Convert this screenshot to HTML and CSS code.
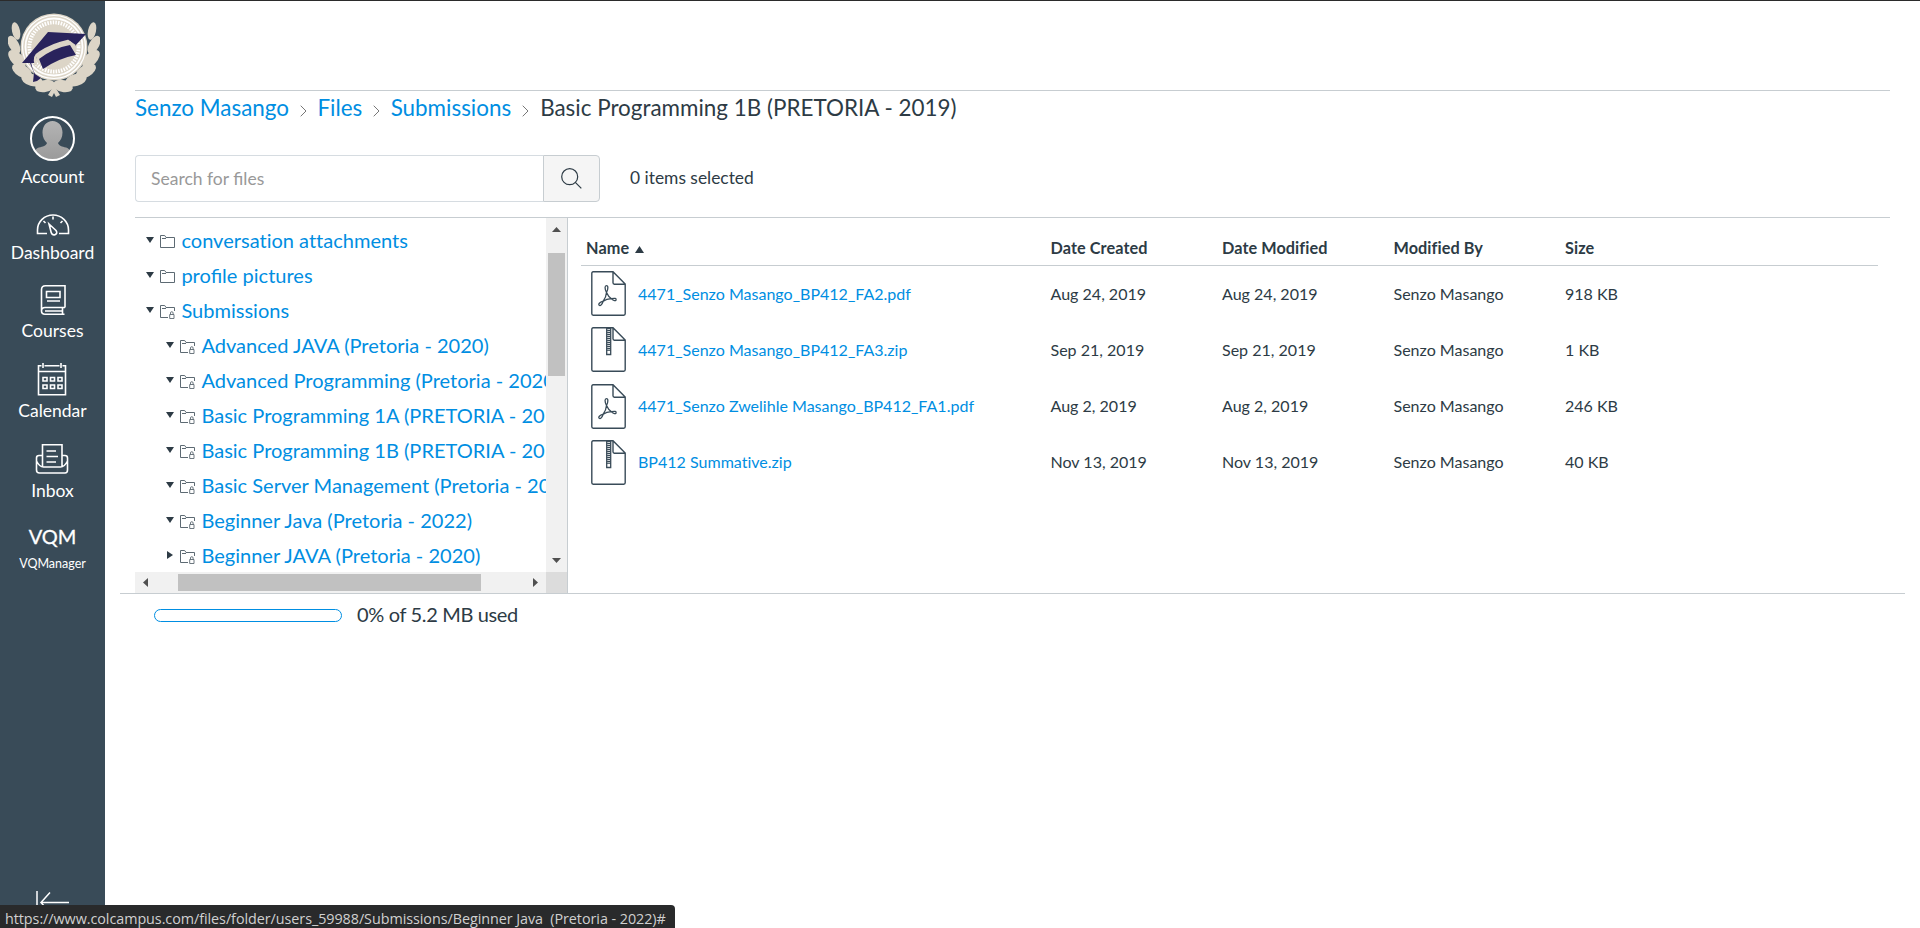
FILE: index.html
```html
<!DOCTYPE html>
<html lang="en">
<head>
<meta charset="utf-8">
<title>Files</title>
<link rel="stylesheet" href="styles.css">
</head>
<body>
<svg class="defs" width="0" height="0">
  <symbol id="folder" viewBox="0 0 15 13"><path d="M.5 12.5V.5h4.2l1.3 2h8.5v10zM2 3.5h4" fill="none" stroke="#5d6a73"/></symbol>
  <symbol id="folder-lock" viewBox="0 0 15 14"><path d="M8 12.5H.5V.5h4.2l1.3 2h8.5V6M2 3.5h4" fill="none" stroke="#5d6a73"/><path d="M9.7 9.5h4.3v4H9.7zM10.5 9.5V8q0-1.3 1.3-1.3T13.1 8v1.5" fill="none" stroke="#5d6a73" stroke-width=".9"/></symbol>
  <symbol id="pdf" viewBox="0 0 35 45"><path d="M22 .8H2.2Q.8.8.8 2.2v40.6q0 1.4 1.4 1.4h30.6q1.4 0 1.4-1.4V13zM22 .8v11q0 1.4 1.4 1.4h10.8" fill="none" stroke="#394b58" stroke-width="1.4"/><path d="M15.5 21.5C13.500 17.500 13.700 14.600 15.500 14.600S17.300 18 15.500 21.500C17 25 18.500 26.500 20.500 27.700C24 26.800 25.400 27.500 25.100 28.900S22.500 29.800 20.500 27.700C16.500 27.800 14 28.800 12.200 30.200C11 33.500 9.400 35.300 8.200 34.300S8.500 31.200 12.200 30.200C14 27.500 15.300 24.800 15.500 21.500Z" fill="none" stroke="#394b58" stroke-width="1.300"/></symbol>
  <symbol id="zip" viewBox="0 0 35 45"><path d="M22 .8H2.2Q.8.8.8 2.2v40.600q0 1.400 1.400 1.400h30.600q1.400 0 1.400-1.400V13zM22 .8v11q0 1.400 1.400 1.400h10.800" fill="none" stroke="#394b58" stroke-width="1.400"/><path d="M15.700 1v26.500h4V1" fill="none" stroke="#394b58" stroke-width="1.300"/><path d="M17.700 1v22" stroke="#394b58" stroke-width="3.200" stroke-dasharray="1.300 .7"/><path d="M15.500 23.300h4.500" stroke="#394b58"/></symbol>
</svg>

<div class="app">
  <nav class="sidebar">
    <svg class="logo" width="92" height="85" viewBox="0 0 92 85">
      <g fill="#dcd5c7">
        <ellipse cx="8" cy="18" rx="4" ry="9" transform="rotate(-12 8 18)"/><ellipse cx="84" cy="18" rx="4" ry="9" transform="rotate(12 84 18)"/>
        <ellipse cx="6" cy="32" rx="5" ry="10" transform="rotate(-28 6 32)"/><ellipse cx="86" cy="32" rx="5" ry="10" transform="rotate(28 86 32)"/>
        <ellipse cx="9" cy="46" rx="6" ry="11" transform="rotate(-44 9 46)"/><ellipse cx="83" cy="46" rx="6" ry="11" transform="rotate(44 83 46)"/>
        <ellipse cx="14" cy="58" rx="6" ry="11" transform="rotate(-60 14 58)"/><ellipse cx="78" cy="58" rx="6" ry="11" transform="rotate(60 78 58)"/>
        <ellipse cx="24" cy="67" rx="6" ry="11" transform="rotate(-74 24 67)"/><ellipse cx="68" cy="67" rx="6" ry="11" transform="rotate(74 68 67)"/>
        <ellipse cx="37" cy="73" rx="6" ry="10" transform="rotate(-104 37 73)"/><ellipse cx="55" cy="73" rx="6" ry="10" transform="rotate(104 55 73)"/>
        <path d="M46 72l-6 10 4 2 2-4 2 4 4-2z"/>
        <circle cx="46" cy="34" r="33.500"/>
      </g>
      <g fill="none" stroke="#fff"><circle cx="46" cy="34" r="31.500" stroke-width="1.200"/><circle cx="46" cy="34" r="28.500" stroke-width="1.800"/><circle cx="46" cy="34" r="24.500" stroke-width="4" stroke-dasharray="1.500 1.200"/></g>
      <circle cx="46" cy="34" r="22.500" fill="#dcd5c7"/>
      <path d="M14 50 40 19l38 2-11 12-5-5Q44 31 29 42l-2 8z" fill="#29235c"/>
      <path d="M28 52Q25 43 31 40 45 31 60 28l7 5" fill="none" stroke="#dcd5c7" stroke-width="2.500"/>
      <path d="M31 46Q45 35 62 32l6 10Q51 45 35 56z" fill="#29235c"/>
      <path d="M23 48q1 8 4 13l6 4-4 3-4 1 1-9-4-10z" fill="#29235c"/>
    </svg>
    <div class="item account">
      <svg class="avatar" width="45" height="45" viewBox="0 0 45 45"><clipPath id="round"><circle cx="22.500" cy="22.500" r="21"/></clipPath><linearGradient id="grey" x2="0" y2="1"><stop stop-color="#b4b4b4"/><stop offset="1" stop-color="#999"/></linearGradient><g clip-path="url(#round)" fill="url(#grey)"><path d="M22.500 5c6 0 10 5 10 11.500 0 5-2 8-4.500 10.500 1 3 4 3.500 8 4.500 4 1.500 7 5 7 14H2c0-9 3-12.500 7-14 4-1 7-1.500 8-4.500-2.500-2.500-4.500-5.500-4.500-10.500C12.500 10 16.500 5 22.500 5z"/></g><circle cx="22.500" cy="22.500" r="21.500" fill="none" stroke="#fff" stroke-width="2"/></svg>
      <span>Account</span>
    </div>
    <div class="item dashboard">
      <svg width="36" height="40" viewBox="0 0 36 40" fill="none" stroke="#fff" stroke-width="1.600"><path d="M12 32.500H2.500V29a15.500 15 0 0 1 31 0v3.500H24M18 15.500v3M8.500 20l2 2M27.500 20l-2 2M14 23l7 6.500q2 3-1 4.200-3 .8-3.800-2.200z"/></svg>
      <span>Dashboard</span>
    </div>
    <div class="item courses">
      <svg width="36" height="40" viewBox="0 0 36 40" fill="none" stroke="#fff" stroke-width="1.600"><path d="M30 28.500V6.800H10.500q-4 0-4 4V32q0 3.200 3.500 3.200h19.500M30 28.500H10q-3.500 0-3.500 3.500M27.500 29v6M10 32h17M11.500 12.500h13.500v6H11.500zM12 22h13"/></svg>
      <span>Courses</span>
    </div>
    <div class="item calendar">
      <svg width="36" height="40" viewBox="0 0 36 40" fill="none" stroke="#fff" stroke-width="1.600"><path d="M7.500 6.800H4.500v29h27v-29h-3M10.500 6.800h15M4.500 12.500h27M9 4v5M27 4v5"/><path d="M9 18.500h4v3.500H9zM16.500 18.500h4v3.500h-4zM24 18.500h4v3.500h-4zM9 26h4v3.500H9zM16.500 26h4v3.500h-4zM24 26h4v3.500h-4z"/></svg>
      <span>Calendar</span>
    </div>
    <div class="item inbox">
      <svg width="36" height="40" viewBox="0 0 36 40" fill="none" stroke="#fff" stroke-width="1.600"><path d="M8.500 27.500V5.800h19.500v21.700M8.500 16.500H5q-2.500 0-2.500 2.500v12q0 3 3 3h25.500q2.500 0 2.500-3V19q0-2.500-2.500-2.500h-3M2.500 22q3 6 7 6h17q4 0 7-6M12.500 12H22M12.500 17.500H24M12.500 23H22"/></svg>
      <span>Inbox</span>
    </div>
    <div class="vqm">VQM</div>
    <div class="vqmanager">VQManager</div>
    <svg class="collapse" width="34" height="22" viewBox="0 0 34 22" fill="none" stroke="#fff" stroke-width="1.500"><path d="M1 0v22M33 11.500H5M14 1.500l-9 10 9 10"/></svg>
  </nav>

  <main class="main">
    <header class="crumbs">
      <a>Senzo Masango</a><svg width="7" height="12" viewBox="0 0 7 12"><path d="M.7.7 6 6 .7 11.300" fill="none" stroke="#777"/></svg><a>Files</a><svg width="7" height="12" viewBox="0 0 7 12"><path d="M.7.7 6 6 .7 11.300" fill="none" stroke="#777"/></svg><a>Submissions</a><svg width="7" height="12" viewBox="0 0 7 12"><path d="M.7.7 6 6 .7 11.300" fill="none" stroke="#777"/></svg><span>Basic Programming 1B (PRETORIA - 2019)</span>
    </header>
    <div class="toolbar">
      <div class="search">Search for files</div>
      <div class="search-btn"><svg width="21" height="21" viewBox="0 0 21 21" fill="none" stroke="#2d3b45" stroke-width="1.200"><circle cx="8.700" cy="8.700" r="8"/><path d="m14.300 14.300 6 6"/></svg></div>
      <div class="selected">0 items selected</div>
    </div>
    <div class="panes">
      <aside class="tree">
        <div class="list">
          <div class="node"><i class="down"></i><svg width="15" height="13"><use href="#folder"/></svg><a class="plain">conversation attachments</a></div>
          <div class="node"><i class="down"></i><svg width="15" height="13"><use href="#folder"/></svg><a>profile pictures</a></div>
          <div class="node"><i class="down"></i><svg width="15" height="14"><use href="#folder-lock"/></svg><a>Submissions</a></div>
          <div class="node sub"><i class="down"></i><svg width="15" height="14"><use href="#folder-lock"/></svg><a>Advanced JAVA (Pretoria - 2020)</a></div>
          <div class="node sub"><i class="down"></i><svg width="15" height="14"><use href="#folder-lock"/></svg><a>Advanced Programming (Pretoria - 2020)</a></div>
          <div class="node sub"><i class="down"></i><svg width="15" height="14"><use href="#folder-lock"/></svg><a>Basic Programming 1A (PRETORIA - 2019)</a></div>
          <div class="node sub"><i class="down"></i><svg width="15" height="14"><use href="#folder-lock"/></svg><a>Basic Programming 1B (PRETORIA - 2019)</a></div>
          <div class="node sub"><i class="down"></i><svg width="15" height="14"><use href="#folder-lock"/></svg><a>Basic Server Management (Pretoria - 2020)</a></div>
          <div class="node sub"><i class="down"></i><svg width="15" height="14"><use href="#folder-lock"/></svg><a>Beginner Java (Pretoria - 2022)</a></div>
          <div class="node sub"><i class="right"></i><svg width="15" height="14"><use href="#folder-lock"/></svg><a>Beginner JAVA (Pretoria - 2020)</a></div>
        </div>
        <div class="vbar"><svg width="9" height="5"><path d="M0 5 4.500 0 9 5z"/></svg><div class="vthumb"></div><svg class="end" width="9" height="5"><path d="M0 0h9L4.500 5z"/></svg></div>
        <div class="hbar"><svg width="5" height="9"><path d="M5 0v9L0 4.500z"/></svg><div class="hthumb"></div><svg class="end" width="5" height="9"><path d="M0 0v9l5-4.500z"/></svg></div>
        <div class="corner"></div>
      </aside>
      <section class="files">
        <div class="row head"><span class="name">Name <svg width="9" height="7"><path d="M0 7 4.500 0 9 7z" fill="#2d3b45"/></svg></span><span>Date Created</span><span>Date Modified</span><span>Modified By</span><span>Size</span></div>
        <div class="row"><span class="file"><svg width="35" height="45"><use href="#pdf"/></svg><a>4471_Senzo Masango_BP412_FA2.pdf</a></span><span>Aug 24, 2019</span><span>Aug 24, 2019</span><span>Senzo Masango</span><span>918 KB</span></div>
        <div class="row"><span class="file"><svg width="35" height="45"><use href="#zip"/></svg><a>4471_Senzo Masango_BP412_FA3.zip</a></span><span>Sep 21, 2019</span><span>Sep 21, 2019</span><span>Senzo Masango</span><span>1 KB</span></div>
        <div class="row"><span class="file"><svg width="35" height="45"><use href="#pdf"/></svg><a>4471_Senzo Zwelihle Masango_BP412_FA1.pdf</a></span><span>Aug 2, 2019</span><span>Aug 2, 2019</span><span>Senzo Masango</span><span>246 KB</span></div>
        <div class="row"><span class="file"><svg width="35" height="45"><use href="#zip"/></svg><a class="plain">BP412 Summative.zip</a></span><span>Nov 13, 2019</span><span>Nov 13, 2019</span><span>Senzo Masango</span><span>40 KB</span></div>
      </section>
    </div>
    <footer class="quota"><div class="meter"></div><span>0% of 5.2 MB used</span></footer>
  </main>
</div>
<div class="status">https://www.colcampus.com/files/folder/users_59988/Submissions/Beginner Java&nbsp; (Pretoria - 2022)#</div>
</body>
</html>
```

FILE: styles.css
```css
* { box-sizing: border-box; }
body { margin: 0; height: 928px; overflow: hidden; background: #fff; color: #2d3b45; font-family: Lato, "Liberation Sans", sans-serif; }
svg { display: block; flex: none; }
.defs { position: absolute; }
a { color: #008ee2; }
.plain { font-variant-ligatures: none; }
.app { display: flex; height: 928px; border-top: 1px solid #2b2b2b; }

.sidebar { width: 105px; flex: none; background: #394b58; color: #fff; display: flex; flex-direction: column; align-items: center; padding-top: 12px; }
.logo { margin-left: 3px; }
.item { display: flex; flex-direction: column; align-items: center; font-size: 17.5px; line-height: 22px; }
.item span { padding-top: 1px; }
.account { margin-top: 18px; }
.avatar { margin-bottom: 4px; }
.dashboard { margin-top: 13px; }
.courses { margin-top: 15px; }
.calendar, .inbox { margin-top: 17px; }
.vqm { margin-top: 22px; font-size: 20px; line-height: 24px; -webkit-text-stroke: .3px #fff; }
.vqmanager { margin-top: 5px; font-size: 12.5px; line-height: 22px; }
.collapse { margin-top: auto; margin-bottom: 15px; }

.main { flex: 1; padding: 89px 15px 0; }
.crumbs { margin: 0 15px; border-top: 1px solid #c7cdd1; height: 65px; padding-top: 3px; display: flex; align-items: flex-start; font-size: 22.43px; line-height: 28px; white-space: nowrap; }
.crumbs svg { margin: 11px 10.2px 0 11.2px; }
.crumbs svg + span { margin-left: .6px; }
.toolbar { margin: 0 15px; height: 47px; display: flex; align-items: center; }
.search { width: 408px; height: 47px; border: 1px solid #d6dce1; border-right: 0; border-radius: 4px 0 0 4px; padding-left: 15px; font-size: 17.5px; line-height: 45px; color: #999; }
.search-btn { width: 57px; height: 47px; border: 1px solid #c7cdd1; border-radius: 0 4px 4px 0; background: #f5f5f5; display: flex; align-items: center; justify-content: center; padding-bottom: 1px; }
.selected { margin-left: 30px; font-size: 17.4px; padding-bottom: 2px; }

.panes { display: flex; margin-top: 15px; padding: 0 15px; height: 377px; position: relative; border-bottom: 1px solid #c7cdd1; }
.panes::before { content: ""; position: absolute; left: 15px; right: 15px; top: 0; border-top: 1px solid #c7cdd1; }
.tree { width: 433px; margin-top: 1px; border-right: 1px solid #c7cdd1; display: grid; grid-template-columns: 411px 21px; grid-template-rows: 354px 21px; flex: none; }
.list { overflow: hidden; padding: 5px 0 0 11px; }
.node { height: 35px; display: flex; align-items: center; font-size: 20.05px; white-space: nowrap; }
.node a { padding-bottom: 2px; }
.node.sub { padding-left: 20px; }
.node svg { margin: 2px 6.4px 0 0; }
.down { border: 4px solid transparent; border-top: 6px solid #2d3b45; border-bottom: 0; width: 8px; margin: 0 6px 1px 0; flex: none; }
.right { border: 4px solid transparent; border-left: 6px solid #2d3b45; border-right: 0; width: 6px; margin: 0 7px 1px 1px; flex: none; }
.vbar { background: #f1f1f1; display: flex; flex-direction: column; align-items: center; padding: 9px 0; }
.vthumb { width: 17px; height: 123px; margin-top: 21px; background: #c1c1c1; }
.hbar { background: #f1f1f1; display: flex; align-items: center; padding: 0 8px; }
.hthumb { height: 17px; width: 303px; margin-left: 30px; background: #c1c1c1; }
.vbar svg, .hbar svg { fill: #505050; }
.vbar .end { margin-top: auto; }
.hbar .end { margin-left: auto; }
.corner { background: #dcdcdc; }

.files { flex: 1; padding: 1px 12px 0 13px; }
.row { height: 56.25px; display: grid; grid-template-columns: 459.5px 171.5px 171.5px 171.5px 1fr; padding-left: 10px; align-items: center; font-size: 16.05px; white-space: nowrap; }
.row > span:not(.file):not(.name) { padding-bottom: 2px; }
.row.head { height: 48px; padding-left: 5px; grid-template-columns: 464.5px 171.5px 171.5px 171.5px 1fr; border-bottom: 1px solid #c7cdd1; font-size: 16.25px; font-weight: 700; padding-top: 11px; letter-spacing: .07px; }
.row.head > span:not(.name) { padding-bottom: 0; }
.name { display: flex; align-items: center; }
.name svg { margin: 4px 0 0 6px; }
.file { display: flex; align-items: center; }
.file a { padding-bottom: 2px; }
.file svg { margin: -1px 12px 0 0; }
.quota { display: flex; align-items: center; height: 43px; padding-left: 34px; font-size: 20px; letter-spacing: -.35px; }
.quota span { padding-bottom: 3px; }
.meter { width: 188px; height: 13px; border: 1px solid #008ee2; border-radius: 7px; margin-right: 15px; }
.status { position: absolute; left: 0; bottom: 0; width: 675px; height: 23px; background: #292a2b; color: #d0d0d0; border-radius: 0 4px 0 0; padding-left: 5px; font: 14.35px/27px "Open Sans", sans-serif; letter-spacing: -.05px; white-space: nowrap; }
```
